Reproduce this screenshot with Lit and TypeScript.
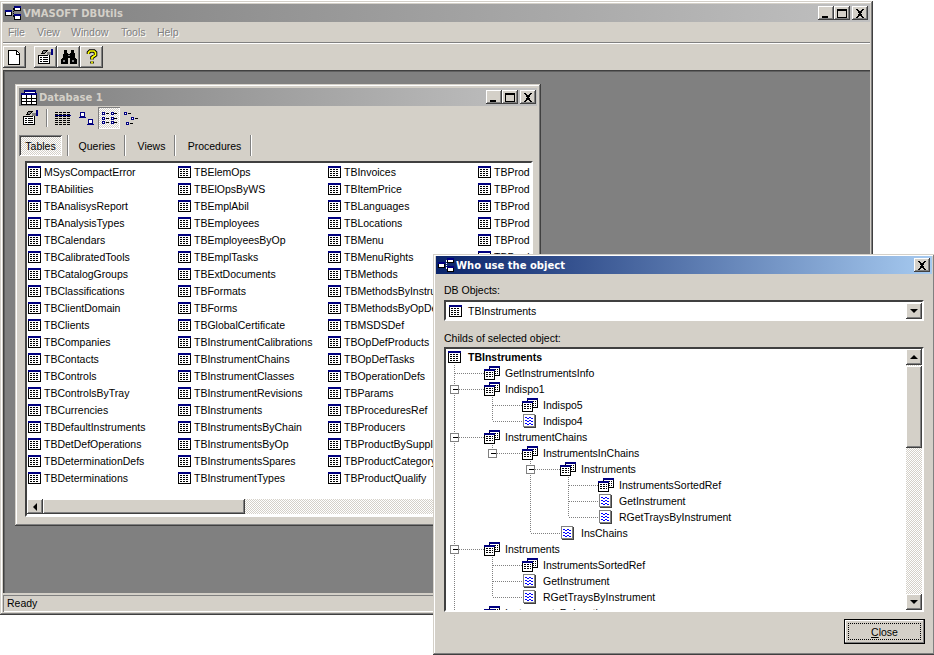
import { LitElement, html, css, svg } from "lit";
import { customElement } from "lit/decorators.js";

const cols = [
  ["MSysCompactError","TBAbilities","TBAnalisysReport","TBAnalysisTypes","TBCalendars","TBCalibratedTools","TBCatalogGroups","TBClassifications","TBClientDomain","TBClients","TBCompanies","TBContacts","TBControls","TBControlsByTray","TBCurrencies","TBDefaultInstruments","TBDetDefOperations","TBDeterminationDefs","TBDeterminations"],
  ["TBElemOps","TBElOpsByWS","TBEmplAbil","TBEmployees","TBEmployeesByOp","TBEmplTasks","TBExtDocuments","TBFormats","TBForms","TBGlobalCertificate","TBInstrumentCalibrations","TBInstrumentChains","TBInstrumentClasses","TBInstrumentRevisions","TBInstruments","TBInstrumentsByChain","TBInstrumentsByOp","TBInstrumentsSpares","TBInstrumentTypes"],
  ["TBInvoices","TBItemPrice","TBLanguages","TBLocations","TBMenu","TBMenuRights","TBMethods","TBMethodsByInstrument","TBMethodsByOpDef","TBMSDSDef","TBOpDefProducts","TBOpDefTasks","TBOperationDefs","TBParams","TBProceduresRef","TBProducers","TBProductBySupplier","TBProductCategory","TBProductQualify"],
  ["TBProd","TBProd","TBProd","TBProd","TBProd","TBProd"],
];

type Node = { t: string; k: "q" | "w"; c?: Node[] };
const sorted = (): Node[] => [
  { t: "InstrumentsSortedRef", k: "q" },
  { t: "GetInstrument", k: "w" },
  { t: "RGetTraysByInstrument", k: "w" },
];
const tree: Node[] = [
  { t: "GetInstrumentsInfo", k: "q" },
  { t: "Indispo1", k: "q", c: [{ t: "Indispo5", k: "q" }, { t: "Indispo4", k: "w" }] },
  { t: "InstrumentChains", k: "q", c: [
    { t: "InstrumentsInChains", k: "q", c: [
      { t: "Instruments", k: "q", c: sorted() },
      { t: "InsChains", k: "w" },
    ] },
  ] },
  { t: "Instruments", k: "q", c: sorted() },
  { t: "InstrumentsRelocation", k: "q" },
  { t: "InstrumentTypes", k: "q" },
];

const lineX = (l: number) => 8.5 + 38 * l;
const iconX = (l: number) => 38 + 38 * (l - 1);
type Row = { n: Node; l: number; guides: number[]; last: boolean };
function flatten(ns: Node[], l: number, guides: number[], out: Row[]) {
  ns.forEach((n, i) => {
    const last = i === ns.length - 1;
    out.push({ n, l, guides, last });
    if (n.c) flatten(n.c, l + 1, last ? guides : [...guides, lineX(l - 1)], out);
  });
  return out;
}
const rows = flatten(tree, 1, [], []);

const dash = "stroke:#808080;stroke-width:1;stroke-dasharray:1 1;fill:none";
function connector(r: Row) {
  const px = lineX(r.l - 1);
  const w = iconX(r.l);
  return html`<svg class="cn" width=${w} height="16" viewBox="0 0 ${w} 16" shape-rendering="crispEdges">
    ${r.guides.map((g) => svg`<line x1=${g} x2=${g} y1="0" y2="16" style=${dash}/>`)}
    <line x1=${px} x2=${px} y1="0" y2=${r.last ? 8 : 16} style=${dash}/>
    <line x1=${px} x2=${w} y1="8.5" y2="8.5" style=${dash}/>
    ${r.n.c ? svg`<rect x=${px - 4} y="4.5" width="8" height="8" fill="#fff" stroke="#808080"/>
      <line x1=${px - 2} x2=${px + 3} y1="8.5" y2="8.5" stroke="#000"/>` : ""}
  </svg>`;
}

const tableIcon = () => html`<svg class="ic" width="13" height="12" viewBox="0 0 13 12" shape-rendering="crispEdges">
  <rect x=".5" y=".5" width="12" height="11" fill="#fff" stroke="#000"/>
  <rect x="0" y="0" width="13" height="2" fill="#000080"/>
  <path d="M2 3.5h9M2 5.5h9M2 7.5h9M2 9.5h9" stroke="#000" stroke-dasharray="2 1" fill="none"/>
</svg>`;

const queryIcon = () => html`<svg class="ic" width="16" height="14" viewBox="0 0 16 14" shape-rendering="crispEdges">
  <rect x="5.5" y=".5" width="10" height="9" fill="#fff" stroke="#000"/>
  <rect x="5" y="0" width="11" height="2" fill="#000080"/>
  <path d="M11 3.5h3M11 5.5h3M11 7.5h3" stroke="#000" stroke-dasharray="1 1"/>
  <rect x=".5" y="3.5" width="10" height="10" fill="#fff" stroke="#000"/>
  <rect x="0" y="3" width="11" height="2" fill="#000080"/>
  <path d="M2 6.5h7M2 8.5h7M2 10.5h7" stroke="#000" stroke-dasharray="2 1"/>
</svg>`;

const waveIcon = () => html`<svg class="ic w" width="13" height="14" viewBox="0 0 13 14" shape-rendering="crispEdges">
  <rect x=".5" y=".5" width="11" height="12" fill="#fff" stroke="#808080"/>
  <path d="M12.5 1v13M1 13.5h12" stroke="#404040"/>
  <path d="M2 3.5h2M6 3.5h2M4 4.5h2M8 4.5h2M2 6.5h2M6 6.5h2M4 7.5h2M8 7.5h2M2 9.5h2M6 9.5h2M4 10.5h2M8 10.5h2" stroke="#0000ff" fill="none"/>
</svg>`;

const netIcon = (a: string) => html`<svg class="ttl-ic" width="16" height="14" viewBox="0 0 16 14" shape-rendering="crispEdges">
  <path d="M6 7.500h3M8.500 3v8M8 2.500h2M8 10.500h2" stroke=${a} fill="none" stroke-dasharray="1 1"/>
  <rect x=".5" y="4.500" width="6" height="5" fill="#fff" stroke="#000"/>
  <rect x="0" y="4" width="7" height="2" fill="#000080"/>
  <rect x="9.500" y=".5" width="6" height="4" fill="#fff" stroke="#000"/>
  <rect x="9" y="0" width="7" height="2" fill="#000080"/>
  <rect x="9.500" y="8.500" width="6" height="5" fill="#fff" stroke="#000"/>
  <rect x="9" y="8" width="7" height="2" fill="#000080"/>
</svg>`;

const dbIcon = () => html`<svg class="ttl-ic" width="16" height="15" viewBox="0 0 16 15" shape-rendering="crispEdges">
  <rect x="3.500" y=".5" width="11" height="9" fill="#fff" stroke="#000"/>
  <rect x="3" y="0" width="12" height="2" fill="#000080"/>
  <rect x=".5" y="3.500" width="15" height="11" fill="#fff" stroke="#000"/>
  <rect x="0" y="3" width="16" height="2" fill="#000080"/>
  <path d="M5.500 5v9M10.500 5v9M1 8.500h14M1 11.500h14" stroke="#000"/>
</svg>`;

const propsIcon = () => html`<svg width="17" height="16" viewBox="0 0 17 16" shape-rendering="crispEdges">
  <path d="M1.500 6.500h9v-1l2-1v10h-11z" fill="#fff" stroke="#000"/>
  <path d="M6.500 1.500h4l-3 3h-3z" fill="#808080" stroke="#000"/>
  <path d="M3 8.500h2M6 8.500h5M3 10.500h2M6 10.500h5M3 12.500h2M6 12.500h5" stroke="#000"/>
  <rect x="10" y="3" width="4" height="3" fill="#808080"/>
  <rect x="14" y="0" width="2" height="6" fill="#000080"/>
</svg>`;

const capBtn = (k: "min" | "max" | "x") => html`<span class="cap ${k}">
  <svg width="10" height="9" viewBox="0 0 10 9" shape-rendering="crispEdges">
    ${k === "min" ? svg`<rect x="1" y="7" width="6" height="2" fill="#000"/>` : ""}
    ${k === "max" ? svg`<path d="M0 .5h9.500v8H.5V1" fill="none" stroke="#000"/><rect x="0" y="0" width="10" height="2" fill="#000"/>` : ""}
    ${k === "x" ? svg`<path d="M1 0h2l2 3 2-3h2L6 4.500 9 9H7L5 6 3 9H1l3-4.500z" fill="#000"/>` : ""}
  </svg></span>`;

const arrow = (d: "u" | "d" | "l") => html`<span class="sb-btn"><span class="tri ${d}"></span></span>`;

@customElement("app-root")
export class AppRoot extends LitElement {
  static styles = css`
    :host { display: block; position: relative; width: 934px; height: 655px; background: #fff; overflow: hidden;
      font: 10.5px "Liberation Sans", Arial, sans-serif; color: #000; }
    * { box-sizing: border-box; }
    svg { display: block; flex: none; }
    .win { position: absolute; display: flex; flex-direction: column; background: #d4d0c8;
      box-shadow: inset -1px -1px #404040, inset 1px 1px #d4d0c8, inset -2px -2px #808080, inset 2px 2px #fff; }
    .main { left: 0; top: 1px; width: 873px; height: 614px; padding: 3px; }
    .title { display: flex; align-items: center; height: 18px; flex: none; padding: 0 2px;
      background: linear-gradient(90deg, #808080, #c0c0c0); color: #d4d0c8;
      font: bold 10px "DejaVu Sans", Verdana, sans-serif; }
    .title .txt { margin-left: 2px; white-space: nowrap; }
    .title .grow { flex: 1; }
    .cap { width: 16px; height: 14px; display: flex; align-items: center; justify-content: center; background: #d4d0c8;
      box-shadow: inset -1px -1px #404040, inset 1px 1px #fff, inset -2px -2px #808080; }
    .cap.x { margin-left: 2px; }
    .menu { display: flex; height: 20px; flex: none; align-items: center; color: #808080; text-shadow: 1px 1px 0 #fff; }
    .menu span:nth-child(1) { width: 29px; margin-left: 5px; }
    .menu span:nth-child(2) { width: 34px; }
    .menu span:nth-child(3) { width: 50px; }
    .menu span:nth-child(4) { width: 36px; }
    .hsep { height: 2px; flex: none; background: #808080; border-bottom: 1px solid #fff; }
    .tools { display: flex; flex: none; padding-top: 2px; height: 24px; }
    .tbtn { width: 23px; height: 22px; display: flex; align-items: center; justify-content: center;
      box-shadow: inset -1px -1px #404040, inset 1px 1px #fff, inset -2px -2px #808080; }
    .tbtn.gap { margin-left: 8px; }
    .client { flex: 1; position: relative; margin-top: 2px; background: #808080;
      box-shadow: inset 1px 1px #404040, inset 2px 2px #606060; }
    .status { flex: none; height: 19px; padding-top: 2px; }
    .status div { height: 17px; padding: 0 4px; line-height: 17px; box-shadow: inset 1px 1px #808080, inset -1px -1px #fff; }
    .child { left: 12px; top: 14px; width: 526px; height: 442px; padding: 4px; }
    .child .title { padding-right: 1px; }
    .ctools { display: flex; align-items: center; height: 24px; flex: none; padding-left: 3px; }
    .ctools .vs { width: 2px; height: 18px; margin: 0 7px; background: #808080; border-right: 1px solid #fff; }
    .ctools .i { margin-right: 8px; }
    .ctools .i2 { margin-right: 4px; }
    .press { width: 22px; height: 22px; display: flex; align-items: center; justify-content: center; margin-right: 4px;
      box-shadow: inset 1px 1px #808080, inset -1px -1px #fff;
      background: repeating-conic-gradient(#fff 0 25%, #d4d0c8 0 50%) 0 0 / 2px 2px; }
    .tabs { display: flex; flex: none; height: 21px; margin-top: 5px; }
    .tab { display: flex; align-items: center; justify-content: center; border-right: 1px solid #fff;
      box-shadow: inset -1px 0 #808080; margin-right: 2px; }
    .tab.a { width: 43px; margin-right: 5px; border: 0; box-shadow: inset 1px 1px #808080, inset -1px -1px #fff, inset 2px 2px #404040;
      background: repeating-conic-gradient(#fff 0 25%, #d4d0c8 0 50%) 0 0 / 2px 2px; }
    .tab.s0 { width: 2px; margin-right: 0; }
    .tab.q { width: 57px; }
    .tab.v { width: 48px; }
    .tab.p { width: 74px; }
    .list { flex: none; display: flex; flex-direction: column; margin: 5px 0 0 6px; width: 508px; height: 356px; background: #fff;
      border: 2px solid; border-color: #404040 #fff #fff #404040; }
    .items { flex: 1; display: flex; overflow: hidden; padding-left: 1px; }
    .col { flex: none; width: 150px; }
    .item { display: flex; align-items: center; height: 17px; white-space: nowrap; }
    .item .t { margin-left: 3px; }
    .hsb { flex: none; display: flex; height: 15px; margin-bottom: 1px; background: repeating-conic-gradient(#fff 0 25%, #d4d0c8 0 50%) 0 0 / 2px 2px; }
    .sb-btn { flex: none; width: 16px; height: 16px; display: flex; align-items: center; justify-content: center; background: #d4d0c8;
      box-shadow: inset -1px -1px #404040, inset 1px 1px #fff, inset -2px -2px #808080; }
    .hsb .sb-btn { height: 15px; }
    .thumb { background: #d4d0c8; box-shadow: inset -1px -1px #404040, inset 1px 1px #fff, inset -2px -2px #808080; }
    .hsb .thumb { width: 202px; }
    .tri { width: 0; height: 0; border: 4px solid transparent; }
    .tri.u { border-top: 0; border-bottom-color: #000; }
    .tri.d { border-bottom: 0; border-top-color: #000; }
    .tri.l { border-left: 0; border-right-color: #000; }
    .dlg { left: 433px; top: 254px; width: 502px; height: 401px; padding: 2px 3px 3px; }
    .dlg .title { background: linear-gradient(90deg, #0a246a, #a6caf0); color: #fff; }
    .lbl { flex: none; height: 13px; line-height: 13px; margin: 10px 0 0 8px; }
    .lbl.l2 { margin-top: 11px; }
    .combo { flex: none; display: flex; align-items: center; margin: 3px 0 0 8px; width: 480px; height: 21px; background: #fff;
      border: 2px solid; border-color: #404040 #fff #fff #404040; padding-left: 3px; }
    .combo .t { flex: 1; margin-left: 6px; }
    .tree { flex: none; display: flex; margin: 2px 0 0 8px; width: 480px; height: 265px; background: #fff;
      border: 2px solid; border-color: #404040 #fff #fff #404040; }
    .nodes { flex: 1; overflow: hidden; min-width: 0; }
    .node { display: flex; align-items: center; height: 16px; white-space: nowrap; }
    .node .t { margin-left: 5px; }
    .node .ic.w { margin: 0 2px 0 1px; }
    .root { padding-left: 2px; font-weight: bold; }
    .root .t { margin-left: 7px; }
    .vsb { flex: none; width: 16px; display: flex; flex-direction: column;
      background: repeating-conic-gradient(#fff 0 25%, #d4d0c8 0 50%) 0 0 / 2px 2px; }
    .vsb .thumb { height: 82px; margin-top: 1px; }
    .vsb .fill { flex: 1; }
    .foot { display: flex; justify-content: flex-end; flex: none; margin-top: 7px; padding-right: 7px; }
    .close { width: 81px; height: 25px; padding: 1px; border: 1px solid #000; display: flex;
      box-shadow: inset -1px -1px #808080, inset 1px 1px #fff; }
    .close span { flex: 1; display: flex; align-items: center; justify-content: center; margin: 2px; border: 1px dotted #000; }
  `;

  render() {
    return html`
      <div class="win main">
        <div class="title">${netIcon("#000")}<span class="txt">VMASOFT DBUtils</span><span class="grow"></span>${capBtn("min")}${capBtn("max")}${capBtn("x")}</div>
        <div class="menu"><span>File</span><span>View</span><span>Window</span><span>Tools</span><span>Help</span></div>
        <div class="hsep"></div>
        <div class="tools">
          <span class="tbtn"><svg width="13" height="15" viewBox="0 0 13 15" shape-rendering="crispEdges"><path d="M.5.500h8l3 3v11H.500z" fill="#fff" stroke="#000"/><path d="M8.500 1v3h3" fill="none" stroke="#000"/></svg></span>
          <span class="tbtn gap">${propsIcon()}</span>
          <span class="tbtn"><svg width="16" height="14" viewBox="0 0 16 14" shape-rendering="crispEdges"><path d="M3 0h3v3h1v1h2V3h1V0h3v3l1 1v3l2 3v4H9V8H7v6H0v-4l2-3V4l1-1z" fill="#000"/><path d="M2 10h2v2H2zM11 10h2v2h-2zM7 5h2v1H7z" fill="#808080"/></svg></span>
          <span class="tbtn"><svg width="12" height="16" viewBox="0 0 12 16"><path d="M2.500 5V3.500L4 2h4l1.500 1.500V6L6 8.500V10.500M6 12.500v2" fill="none" stroke="#000" stroke-width="3.600"/><path d="M2.500 5V3.500L4 2h4l1.500 1.500V6L6 8.500V10.500M6 12.500v2" fill="none" stroke="#ffff00" stroke-width="1.700"/></svg></span>
        </div>
        <div class="client">
          <div class="win child">
            <div class="title">${dbIcon()}<span class="txt">Database 1</span><span class="grow"></span>${capBtn("min")}${capBtn("max")}${capBtn("x")}</div>
            <div class="ctools">
              ${propsIcon()}
              <span class="vs"></span>
              <svg class="i" width="16" height="15" viewBox="0 0 16 15" shape-rendering="crispEdges"><path d="M0 1.500h16M0 3.500h16M0 5.500h16M0 7.500h16M0 9.500h16M0 11.500h16M0 13.500h16" stroke="#000" stroke-dasharray="3 1"/><path d="M0 4.500h16" stroke="#000080"/></svg>
              <svg class="i2" width="15" height="15" viewBox="0 0 15 15" shape-rendering="crispEdges"><path d="M1.500 1.500h4v4h-4zM9.500 8.500h4v4h-4z" fill="#fff" stroke="#000080"/><path d="M0 6.500h7M8 13.500h7" stroke="#000080"/></svg>
              <span class="press"><svg width="15" height="12" viewBox="0 0 15 12" shape-rendering="crispEdges"><path d="M.5.500h2v2h-2zM.5 5.500h2v2h-2zM.5 9.500h2v2h-2zM9.500.500h2v2h-2zM9.500 5.500h2v2h-2zM9.500 9.500h2v2h-2z" fill="#fff" stroke="#000080"/><path d="M4 1.500h3M4 6.500h3M4 10.500h3M12 1.500h3M12 6.500h3M12 10.500h3" stroke="#000"/></svg></span>
              <svg width="15" height="13" viewBox="0 0 15 13" shape-rendering="crispEdges"><path d="M.5.500h2v2h-2zM7.500 5.500h2v2h-2zM2.500 10.500h2v2h-2z" fill="#fff" stroke="#000080"/><path d="M4 1.500h3M11 6.500h3M6 11.500h3" stroke="#000"/></svg>
            </div>
            <div class="tabs">
              <span class="tab a">Tables</span><span class="tab s0"></span>
              <span class="tab q">Queries</span><span class="tab v">Views</span><span class="tab p">Procedures</span>
            </div>
            <div class="list">
              <div class="items">
                ${cols.map((c) => html`<div class="col">${c.map((t) => html`<div class="item">${tableIcon()}<span class="t">${t}</span></div>`)}</div>`)}
              </div>
              <div class="hsb">${arrow("l")}<span class="thumb"></span></div>
            </div>
          </div>
        </div>
        <div class="status"><div>Ready</div></div>
      </div>

      <div class="win dlg">
        <div class="title">${netIcon("#fff")}<span class="txt">Who use the object</span><span class="grow"></span>${capBtn("x")}</div>
        <div class="lbl">DB Objects:</div>
        <div class="combo">${tableIcon()}<span class="t">TBInstruments</span>${arrow("d")}</div>
        <div class="lbl l2">Childs of selected object:</div>
        <div class="tree">
          <div class="nodes">
            <div class="node root">${tableIcon()}<span class="t">TBInstruments</span></div>
            ${rows.map((r) => html`<div class="node">${connector(r)}${r.n.k === "q" ? queryIcon() : waveIcon()}<span class="t">${r.n.t}</span></div>`)}
          </div>
          <div class="vsb">${arrow("u")}<span class="thumb"></span><span class="fill"></span>${arrow("d")}</div>
        </div>
        <div class="foot"><div class="close"><span><u>C</u>lose</span></div></div>
      </div>
    `;
  }
}
